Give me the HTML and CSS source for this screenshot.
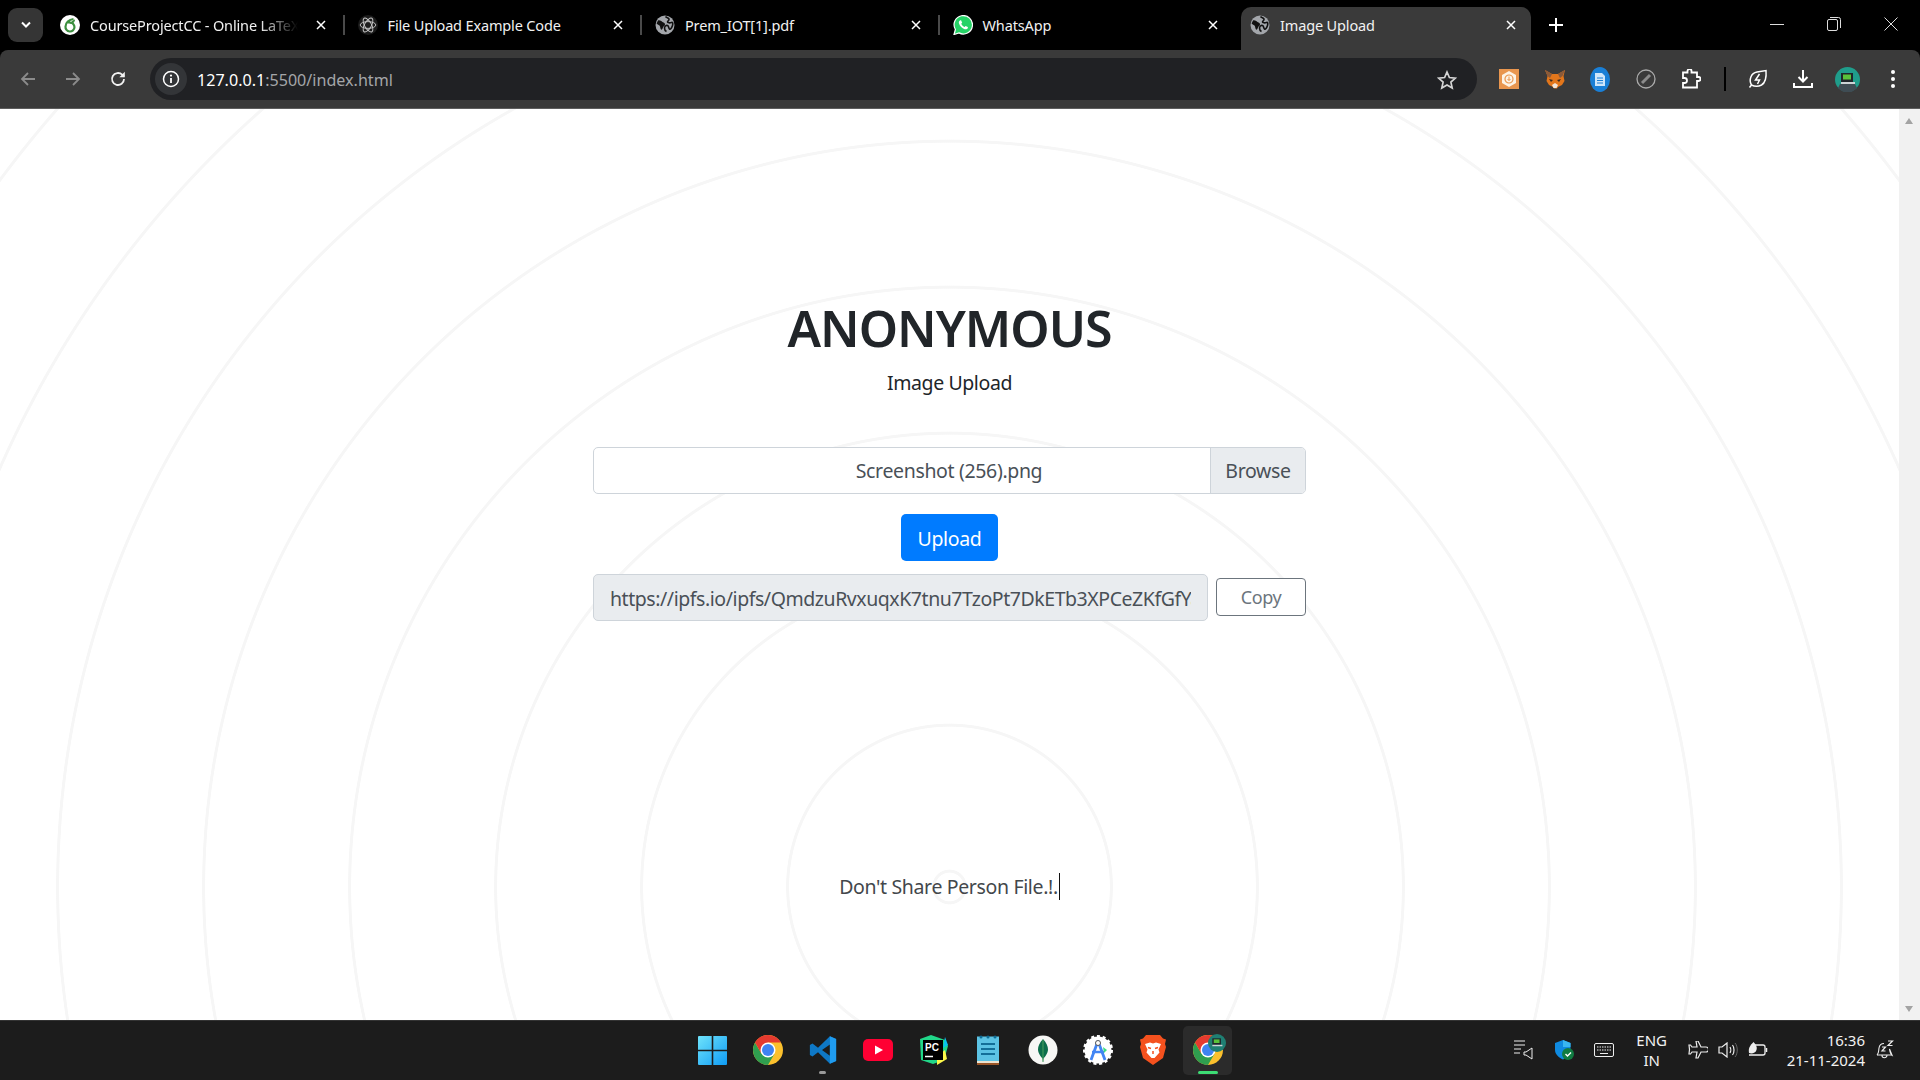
FILE: index.html
```html
<!DOCTYPE html>
<html lang="en">
<head>
  <meta charset="UTF-8">
  <title>Image Upload</title>
  <link rel="stylesheet" href="styles.css">
</head>
<body>

  <svg class="defs" width="0" height="0">
    <symbol id="globe" viewBox="0 0 20 20">
      <circle cx="10" cy="10" r="9.5" fill="#a3a6ab"/>
      <path d="M3 5.500c2-.5 3 .5 4.500 1.500s2.500 1 2.500 2.500-1.500 1.500-2 3-1 2.500-2 2c-1-1-.5-3-1.500-4S2 9.500 1.600 8.500z" fill="#111"/>
      <path d="M10.500 1.500c1 1.500 3 1 3.500 2.500s-1.500 2-1.500 3 2.500 1 4 .5 1.500 1 1 3-2 4-3 3.500-.5-3-2-3.500-3 1-3 2.500 1 3 2 3.500" fill="none" stroke="#111" stroke-width="1.600"/>
    </symbol>
    <symbol id="close" viewBox="0 0 12 12">
      <path d="M2 2l8 8M10 2l-8 8" fill="none" stroke="#fff" stroke-width="1.500"/>
    </symbol>
    <symbol id="chrome" viewBox="0 0 48 48">
      <circle cx="24" cy="24" r="20" fill="#fbc02d"/>
      <path d="M6.680 14A20 20 0 0 0 24 44l8.660-15H15.340z" fill="#2f9e4f"/>
      <path d="M24 4A20 20 0 0 0 6.680 14l8.660 15L24 14h17.320A20 20 0 0 0 24 4z" fill="#e53a2f"/>
      <circle cx="24" cy="24" r="10" fill="#fff"/>
      <circle cx="24" cy="24" r="8" fill="#3f83f1"/>
    </symbol>
  </svg>

  <div class="browser">
    <header class="tabstrip">
      <button class="tab-menu">
        <svg width="12" height="8" viewBox="0 0 12 8"><path d="M2 1.500l4 4 4-4" fill="none" stroke="#fff" stroke-width="2"/></svg>
      </button>

      <div class="tab">
        <svg class="favicon" viewBox="0 0 20 20">
          <circle cx="10" cy="10" r="10" fill="#fff"/>
          <path d="M13.500 4C9 4.500 5.500 7.500 5.500 11.500a4.500 4.500 0 1 0 4.500-4c-1.500 0-2 .5-2 .5" fill="none" stroke="#3c8f3f" stroke-width="2.200"/>
          <path d="M10 9c1-2.500 3-4 5-4.500 0 2.500-2 4.500-5 4.500z" fill="#3c8f3f"/>
        </svg>
        <span class="tab-title tab-title-fade">CourseProjectCC - Online LaTeX</span>
        <svg class="tab-close"><use href="#close"/></svg>
      </div>

      <div class="tab">
        <svg class="favicon" viewBox="0 0 20 20">
          <circle cx="10" cy="10" r="10" fill="#1c1c1c"/>
          <g fill="none" stroke="#c9c9c9" stroke-width=".9">
            <ellipse cx="10" cy="10" rx="7.800" ry="3.400"/>
            <ellipse cx="10" cy="10" rx="7.800" ry="3.400" transform="rotate(60 10 10)"/>
            <ellipse cx="10" cy="10" rx="7.800" ry="3.400" transform="rotate(120 10 10)"/>
          </g>
        </svg>
        <span class="tab-title">File Upload Example Code</span>
        <svg class="tab-close"><use href="#close"/></svg>
      </div>

      <div class="tab">
        <svg class="favicon"><use href="#globe"/></svg>
        <span class="tab-title">Prem_IOT[1].pdf</span>
        <svg class="tab-close"><use href="#close"/></svg>
      </div>

      <div class="tab tab-last">
        <svg class="favicon" viewBox="0 0 20 20">
          <path d="M1 19.500l1.400-5A9.200 9.200 0 1 1 6 17.900z" fill="#25d366" stroke="#fff" stroke-width="1.200"/>
          <path d="M7 5.500c-1 .6-1.500 1.600-1 3 1 2.700 3 4.700 5.700 5.700 1.400.4 2.500 0 3-1 .3-.6.300-1 .1-1.200l-2.200-1.100-1 1.200c-1.500-.6-2.700-1.800-3.400-3.400l1-1L8.200 5.500c-.3-.3-.8-.3-1.200 0z" fill="#fff"/>
        </svg>
        <span class="tab-title">WhatsApp</span>
        <svg class="tab-close"><use href="#close"/></svg>
      </div>

      <div class="tab tab-active">
        <svg class="favicon"><use href="#globe"/></svg>
        <span class="tab-title">Image Upload</span>
        <svg class="tab-close"><use href="#close"/></svg>
      </div>

      <svg class="tab-new" width="14" height="14" viewBox="0 0 14 14"><path d="M7 0v14M0 7h14" stroke="#fff" stroke-width="2"/></svg>

      <div class="win-controls">
        <svg width="14" height="14" viewBox="0 0 14 14"><path d="M0 7.500h14" stroke="#ddd"/></svg>
        <svg width="14" height="14" viewBox="0 0 14 14"><rect x=".5" y="2.500" width="10" height="11" rx="1.500" fill="none" stroke="#ddd"/><path d="M3 .5h8.500a2 2 0 0 1 2 2V11" fill="none" stroke="#ddd"/></svg>
        <svg width="14" height="14" viewBox="0 0 14 14"><path d="M.5.5l13 13M13.500.5l-13 13" stroke="#ddd"/></svg>
      </div>
    </header>

    <nav class="toolbar">
      <div class="nav-btn">
        <svg width="18" height="18" viewBox="0 0 18 18"><path d="M16 9H3M9 3L3 9l6 6" fill="none" stroke="#8b8b8b" stroke-width="1.800"/></svg>
      </div>
      <div class="nav-btn">
        <svg width="18" height="18" viewBox="0 0 18 18"><path d="M2 9h13M9 3l6 6-6 6" fill="none" stroke="#8b8b8b" stroke-width="1.800"/></svg>
      </div>
      <div class="nav-btn">
        <svg width="18" height="18" viewBox="0 0 18 18"><path d="M15 9a6 6 0 1 1-1.800-4.300L15 6.500" fill="none" stroke="#f1f1f1" stroke-width="1.800"/><path d="M15.800 1.800v5.500h-5.500z" fill="#f1f1f1"/></svg>
      </div>

      <div class="omnibox">
        <span class="site-info">
          <svg width="18" height="18" viewBox="0 0 18 18"><circle cx="9" cy="9" r="7.500" fill="none" stroke="#fff" stroke-width="1.500"/><path d="M9 8v5" stroke="#fff" stroke-width="1.800"/><circle cx="9" cy="5.600" r="1.100" fill="#fff"/></svg>
        </span>
        <span class="url"><b>127.0.0.1</b>:5500/index.html</span>
        <svg class="star" width="20" height="20" viewBox="0 0 20 20"><path d="M10 2l2.400 5.500 6 .6-4.500 4 1.300 5.900-5.200-3-5.200 3 1.300-5.900-4.500-4 6-.6z" fill="none" stroke="#d5d5d5" stroke-width="1.700"/></svg>
      </div>

      <div class="ext-btn">
        <svg width="20" height="20" viewBox="0 0 20 20">
          <rect width="20" height="20" fill="#e9964f"/>
          <path d="M10 2l7 4v8l-7 4-7-4V6z" fill="#fdf3e6"/>
          <circle cx="10" cy="10" r="4" fill="none" stroke="#e9964f" stroke-width="1.200"/>
          <path d="M10 7.500v4M8.500 10l1.500 1.500L11.500 10" fill="none" stroke="#e9964f"/>
        </svg>
      </div>
      <div class="ext-btn">
        <svg width="20" height="20" viewBox="0 0 20 20">
          <path d="M0 1l7 4h6l7-4-1.500 6 1 5-2.500 4-4 2-1 1.500H9L8 18l-4-2-2.500-4 1-5z" fill="#e2761b"/>
          <path d="M0 1l7 4-2 4-2.500-2zM20 1l-7 4 2 4 2.500-2z" fill="#8a5a3a"/>
          <path d="M4 10l4 1-2 2zM16 10l-4 1 2 2z" fill="#3a2a20"/>
          <path d="M7 16l3-2 3 2-1.500 3h-3z" fill="#f2e4d6"/>
        </svg>
      </div>
      <div class="ext-btn">
        <svg width="20" height="25" viewBox="0 0 20 25">
          <ellipse cx="10" cy="12.500" rx="10" ry="12.500" fill="#1a7fd6"/>
          <path d="M5 6h7l3 3v10H5z" fill="#cfe6fa"/>
          <path d="M7 11h6M7 13.500h6M7 16h6" stroke="#1a7fd6"/>
        </svg>
      </div>
      <div class="ext-btn">
        <svg width="20" height="20" viewBox="0 0 20 20"><circle cx="10" cy="10" r="9" fill="none" stroke="#aaa" stroke-width="1.300"/><path d="M6 14l8-8" stroke="#8c8c8c" stroke-width="3"/></svg>
      </div>
      <div class="ext-btn">
        <svg width="20" height="20" viewBox="0 0 20 20"><path d="M2 3.500h4.500V2a2 2 0 0 1 4 0v1.500H16V8h1.500a2 2 0 0 1 0 4H16v6.500H2V14h1.500a2.500 2.500 0 0 0 0-5H2z" fill="none" stroke="#fff" stroke-width="1.800"/></svg>
      </div>
      <div class="tool-sep"></div>
      <div class="ext-btn ext-narrow">
        <svg width="20" height="20" viewBox="0 0 20 20"><path d="M3.500 16C.5 11 3 4 9 3l9-1.500c.5 6 0 12-4.500 14.500-3.500 1.800-7 1.500-10 0z" fill="none" stroke="#fff" stroke-width="1.500"/><path d="M11.500 5L7.500 11h4l-2 4" fill="none" stroke="#fff" stroke-width="1.500"/><path d="M1.500 18.500l2-2.500" stroke="#fff" stroke-width="1.500"/></svg>
      </div>
      <div class="ext-btn ext-narrow">
        <svg width="20" height="20" viewBox="0 0 20 20"><path d="M10 1v11M5.500 8l4.500 4.500L14.500 8" fill="none" stroke="#fff" stroke-width="2"/><path d="M1 14v4h18v-4" fill="none" stroke="#fff" stroke-width="2"/></svg>
      </div>
      <div class="ext-btn ext-narrow">
        <svg width="25" height="25" viewBox="0 0 25 25">
          <circle cx="12.500" cy="12.500" r="12.500" fill="#1f9d8b"/>
          <path d="M3 21a12.500 12.500 0 0 0 19 0l-2-4H5z" fill="#3f4c54"/>
          <rect x="6" y="6" width="12" height="9" fill="#20262b"/>
          <rect x="8" y="7.500" width="8" height="5" fill="#5ac23a"/>
          <rect x="6" y="15" width="14" height="2" fill="#cdd3d6"/>
        </svg>
      </div>
      <div class="ext-btn ext-narrow">
        <svg width="4" height="18" viewBox="0 0 4 18"><circle cx="2" cy="2" r="2" fill="#fff"/><circle cx="2" cy="9" r="2" fill="#fff"/><circle cx="2" cy="16" r="2" fill="#fff"/></svg>
      </div>
    </nav>

    <div class="viewport">
      <main class="page">
        <section class="upload-box">
          <h1>ANONYMOUS</h1>
          <p class="subtitle">Image Upload</p>

          <div class="file-field">
            <span class="file-name">Screenshot (256).png</span>
            <span class="file-browse">Browse</span>
          </div>

          <button class="btn-upload">Upload</button>

          <div class="result-row">
            <div class="result-link"><span>https://ipfs.io/ipfs/QmdzuRvxuqxK7tnu7TzoPt7DkETb3XPCeZKfGfYabc</span></div>
            <button class="btn-copy">Copy</button>
          </div>
        </section>

        <p class="typed"><span>Don't Share Person File.!.</span></p>
      </main>

      <aside class="scrollbar">
        <span class="arrow arrow-up"></span>
        <span class="arrow arrow-down"></span>
      </aside>
    </div>

    <footer class="taskbar">
      <div></div>
      <div class="task-icons">
        <div class="task-icon">
          <svg width="29" height="29" viewBox="0 0 29 29">
            <defs><linearGradient id="win" x1="0" y1="0" x2="1" y2="1"><stop offset="0" stop-color="#6fe3fb"/><stop offset="1" stop-color="#0f9cf5"/></linearGradient></defs>
            <path d="M1 0h12.700v13.700H0V1a1 1 0 0 1 1-1zM15.300 0H28a1 1 0 0 1 1 1v12.700H15.300zM0 15.300h13.700V29H1a1 1 0 0 1-1-1zM15.300 15.300H29V28a1 1 0 0 1-1 1H15.300z" fill="url(#win)"/>
          </svg>
        </div>
        <div class="task-icon"><svg width="36" height="36"><use href="#chrome"/></svg></div>
        <div class="task-icon task-open">
          <svg width="30" height="30" viewBox="0 0 24 24">
            <path d="M17.500 1L8 10.200 3.600 6.800 1.500 8v8l2.100 1.200L8 13.800 17.500 23l5-2.200V3.200zM17.500 7.500v9L11.200 12z" fill="#0e78c6" fill-rule="evenodd"/>
            <path d="M17.500 1l5 2.200v17.600l-5 2.200z" fill="#1f9cf0"/>
          </svg>
        </div>
        <div class="task-icon">
          <svg width="30" height="22" viewBox="0 0 30 22"><rect width="30" height="22" rx="5" fill="#ff0033"/><path d="M12 6.500l8 4.500-8 4.500z" fill="#fff"/></svg>
        </div>
        <div class="task-icon">
          <svg width="32" height="32" viewBox="0 0 32 32">
            <path d="M3 5l11-4 14 5 3 6-4 14-11 4-12-4z" fill="#21d789"/>
            <path d="M28 3l3 8-5 3z" fill="#07c3f2"/>
            <path d="M20 31l10-6-2-9-8 6z" fill="#fcf84a"/>
            <rect x="6" y="6" width="20" height="20" fill="#000"/>
            <text class="pc-text" x="8" y="17">PC</text>
            <path d="M8 22.500h8" stroke="#fff" stroke-width="1.500"/>
          </svg>
        </div>
        <div class="task-icon">
          <svg width="22" height="30" viewBox="0 0 22 30">
            <rect y="1.500" width="22" height="28" fill="#5cc3e4"/>
            <rect y="26" width="22" height="2" fill="#ece3d0"/>
            <rect y="28" width="22" height="2" fill="#9a5527"/>
            <path d="M4 2h0M11 2h0M18 2h0" stroke="#0f6d96" stroke-width="3" stroke-linecap="round"/>
            <path d="M4 9h14M4 14h14M4 19h14" stroke="#136f98" stroke-width="2"/>
          </svg>
        </div>
        <div class="task-icon">
          <svg width="30" height="30" viewBox="0 0 30 30"><circle cx="15" cy="15" r="14.500" fill="#f7f7f5"/><path d="M15 4c3.500 4 5 7 5 10.500S17 22 15.500 23.500L15 27l-.5-3.500C13 22 10 18 10 14.500S11.500 8 15 4z" fill="#0d6e4b"/><path d="M15 5v22" stroke="#4aa05f"/></svg>
        </div>
        <div class="task-icon">
          <svg width="30" height="30" viewBox="0 0 30 30">
            <circle cx="15" cy="15" r="13.500" fill="#fff" stroke="#fff" stroke-width="3" stroke-dasharray="3 2.650"/>
            <path d="M15 6L8 25M15 6l7 19" fill="none" stroke="#4285f4" stroke-width="2.800"/>
            <path d="M9 17h12" stroke="#4285f4" stroke-width="2.500"/>
            <path d="M20 12l4 3-3 3z" fill="#3ddc84"/>
            <circle cx="15" cy="8" r="2.500" fill="#fff" stroke="#555"/>
          </svg>
        </div>
        <div class="task-icon">
          <svg width="26" height="30" viewBox="0 0 26 30">
            <path d="M6 0h14l3 3.500 3 1-1 4.500 1 3-3 11L13 30 3 23 0 12l1-3L0 4.500l3-1z" fill="#f4511e"/>
            <path d="M5 9l5-1.500 3 1 3-1L21 9l-2.500 5.500 1 3L14.500 23h-3l-5-5.500 1-3z" fill="#fff"/>
            <path d="M8 12.500l3 1M18 12.500l-3 1M13 16v3" stroke="#f4511e" stroke-width="1.500"/>
          </svg>
        </div>
        <div class="task-icon task-active">
          <svg width="36" height="36"><use href="#chrome"/></svg>
          <svg class="badge" width="18" height="18" viewBox="0 0 25 25">
            <circle cx="12.500" cy="12.500" r="12.500" fill="#1f7f73"/>
            <rect x="6" y="6" width="12" height="9" fill="#20262b"/>
            <rect x="8" y="7.500" width="8" height="5" fill="#5ac23a"/>
            <rect x="6" y="15" width="14" height="2" fill="#cdd3d6"/>
          </svg>
        </div>
      </div>

      <div class="tray">
        <div class="tray-btn">
          <svg width="20" height="20" viewBox="0 0 20 20"><path d="M0 1h11M0 5h11M0 9h7M0 13h6" stroke="#eee"/><path d="M12 12l6-4v11l-6-4h-2v-3z" fill="none" stroke="#eee"/></svg>
        </div>
        <div class="tray-btn">
          <svg width="20" height="20" viewBox="0 0 20 20"><path d="M9 0l7.500 3v7c0 4-3.500 7.500-7.500 9.500C4.500 17.500 1 14 1 10V3z" fill="#0f8ae0"/><path d="M9 0l7.500 3v4H9z" fill="#39b7f0"/><circle cx="14" cy="14" r="6" fill="#107c41"/><path d="M11.500 14l2 2 3.500-3.500" fill="none" stroke="#fff" stroke-width="1.400"/></svg>
        </div>
        <div class="tray-btn">
          <svg width="20" height="14" viewBox="0 0 20 14"><rect x=".5" y=".5" width="19" height="13" rx="1.500" fill="none" stroke="#eee"/><path d="M3 4h14M3 7h14" stroke="#eee" stroke-dasharray="1.500 1"/><path d="M6 10.500h8" stroke="#eee"/></svg>
        </div>
        <div class="tray-lang">ENG<br>IN</div>
        <div class="tray-status">
          <svg width="20" height="18" viewBox="0 0 20 18"><path d="M8 0h2l3 6h5a2 2 0 0 1 0 5h-5l-3 6H8l1-6H4l-1.500 2H1l.5-4.500L1 4h1.500L4 6h5z" fill="none" stroke="#eee" stroke-width="1.200"/></svg>
        </div>
        <div class="tray-status">
          <svg width="20" height="16" viewBox="0 0 20 16"><path d="M1 5h3l5-4v14l-5-4H1z" fill="none" stroke="#eee" stroke-width="1.200"/><path d="M12 5c1 1.500 1 4.500 0 6M14.500 3c2 2.500 2 7.500 0 10" fill="none" stroke="#eee" stroke-width="1.200"/><path d="M17 1c3 3.500 3 10.500 0 14" fill="none" stroke="#666"/></svg>
        </div>
        <div class="tray-status">
          <svg width="20" height="16" viewBox="0 0 20 16"><path d="M6 3h9a2 2 0 0 1 2 2v6a2 2 0 0 1-2 2H1" fill="none" stroke="#eee" stroke-width="1.300"/><path d="M18.500 6v4" stroke="#eee" stroke-width="1.500"/><path d="M1 11C0 6 2.500 3 5.500 0 8 3 9.500 5 8.500 8s-4.500 4-7.500 3z" fill="#eee"/></svg>
        </div>
        <div class="clock">16:36<br>21-11-2024</div>
        <div class="tray-bell">
          <svg width="18" height="20" viewBox="0 0 18 20"><path d="M1 15c2-1.500 1.500-4 2-7s3-4.500 5-4.500M13.500 9c.3 2.500.5 4.500 2.500 6z" fill="none" stroke="#eee" stroke-width="1.100"/><path d="M1 15h15M6 15.500c0 3 4.500 3 5 0" fill="none" stroke="#eee" stroke-width="1.100"/><path d="M6 7h3.500L6 11h3.500M12 1h4.500L12 5.500h4.500" fill="none" stroke="#eee" stroke-width="1.200"/></svg>
        </div>
      </div>
    </footer>
  </div>

</body>
</html>
```

FILE: styles.css
```css
* {
  margin: 0;
  padding: 0;
  box-sizing: border-box;
}

body {
  font-family: "Noto Sans", "Open Sans", sans-serif;
  background-color: #000;
  overflow: hidden;
}

.defs {
  display: block;
  height: 0;
}

.browser {
  width: 1920px;
  height: 1080px;
  display: flex;
  flex-direction: column;
}

/* tabs */

.tabstrip {
  height: 50px;
  display: flex;
  align-items: center;
  background-color: #000;
  padding-left: 8px;
}

.tab-menu {
  width: 35px;
  height: 34px;
  margin-right: 4px;
  margin-top: -1px;
  display: flex;
  align-items: center;
  justify-content: center;
  background-color: #353535;
  border: none;
  border-radius: 9px;
}

.tab {
  width: 297.5px;
  height: 50px;
  padding-left: 13px;
  padding-right: 18px;
  display: flex;
  align-items: center;
  position: relative;
  color: #f1f1f1;
  font-size: 14.5px;
  letter-spacing: -0.15px;
}

.tab::after {
  content: '';
  position: absolute;
  right: 0;
  top: 15px;
  height: 20px;
  width: 2px;
  background-color: #4a4a4a;
}

.tab-last::after,
.tab-active::after {
  display: none;
}

.tab-active::before {
  content: '';
  position: absolute;
  left: 4px;
  right: 4px;
  top: 7px;
  bottom: 0;
  background-color: #3a3a3a;
  border-radius: 10px 10px 0 0;
}

.tab-active > * {
  position: relative;
}

.favicon {
  width: 20px;
  height: 20px;
  flex: none;
  margin-right: 10px;
}

.tab-title {
  flex: 1;
  white-space: nowrap;
}

.tab-title-fade {
  -webkit-mask-image: linear-gradient(to right, #000 170px, transparent 208px);
  mask-image: linear-gradient(to right, #000 170px, transparent 208px);
}

.tab-close {
  width: 12px;
  height: 12px;
  flex: none;
}

.tab-new {
  margin-left: 14px;
  flex: none;
}

.win-controls {
  margin-left: auto;
  display: flex;
  gap: 43px;
  padding-right: 22px;
  margin-top: -2px;
}

/* toolbar */

.toolbar {
  height: 59px;
  display: flex;
  align-items: center;
  padding-left: 5px;
  padding-right: 5px;
  background-color: #3a3a3a;
  border-bottom: 1px solid #5e5e5e;
  border-radius: 8px 8px 0 0;
}

.nav-btn {
  width: 45px;
  display: flex;
  justify-content: center;
}

.omnibox {
  flex: 1;
  height: 42px;
  margin-left: 10px;
  margin-right: 10px;
  padding-left: 5px;
  padding-right: 20px;
  display: flex;
  align-items: center;
  background-color: #202124;
  border-radius: 21px;
}

.site-info {
  width: 32px;
  height: 32px;
  margin-right: 10px;
  display: flex;
  align-items: center;
  justify-content: center;
  background-color: #333538;
  border-radius: 50%;
}

.url {
  flex: 1;
  padding-top: 1px;
  color: #a4a6a9;
  font-size: 16.1px;
}

.url b {
  color: #fff;
  font-weight: 400;
}

.star {
  margin-top: 1px;
}

.ext-btn {
  width: 45.5px;
  display: flex;
  align-items: center;
  justify-content: center;
}

.ext-narrow {
  width: 44.8px;
}

.tool-sep {
  width: 2px;
  height: 24px;
  margin: 0 9.700px 0 10px;
  background-color: #000;
}

/* page */

.viewport {
  height: 911px;
  display: flex;
}

.page {
  flex: 1;
  display: flex;
  flex-direction: column;
  align-items: center;
  background-color: #fff;
  background-image: repeating-radial-gradient(circle at 949.5px 778px, transparent 0, transparent 14px, #f6f6f6 14.700px, #f6f6f6 17px, transparent 17.700px, transparent 146px);
  color: #212529;
}

.upload-box {
  width: 713px;
  padding-top: 189px;
  display: flex;
  flex-direction: column;
  align-items: center;
}

h1 {
  font-size: 50px;
  font-weight: 600;
  line-height: 60px;
  letter-spacing: -1px;
}

.subtitle {
  margin-top: 10px;
  font-size: 19.5px;
  line-height: 30px;
  letter-spacing: -0.4px;
}

.file-field {
  width: 100%;
  height: 47px;
  margin-top: 49px;
  display: flex;
  background-color: #fff;
  border: 1px solid #ced4da;
  border-radius: 5px;
  color: #495057;
  font-size: 19.5px;
  letter-spacing: -0.35px;
  overflow: hidden;
}

.file-name {
  flex: 1;
  display: flex;
  align-items: center;
  justify-content: center;
  padding-left: 94px;
}

.file-browse {
  width: 95px;
  display: flex;
  align-items: center;
  justify-content: center;
  background-color: #e9ecef;
  border-left: 1px solid #ced4da;
}

.btn-upload {
  width: 97px;
  height: 47px;
  margin-top: 20px;
  padding-top: 1px;
  background-color: #007bff;
  color: #fff;
  border: none;
  border-radius: 5px;
  font-family: inherit;
  font-size: 19.5px;
  letter-spacing: -0.35px;
}

.result-row {
  width: 100%;
  margin-top: 13px;
  display: flex;
  align-items: center;
  justify-content: space-between;
}

.result-link {
  width: 615px;
  height: 47px;
  padding: 1px 16px 0;
  display: flex;
  align-items: center;
  background-color: #e9ecef;
  border: 1px solid #ced4da;
  border-radius: 5px;
  color: #495057;
  font-size: 19.5px;
  letter-spacing: -0.44px;
}

.result-link span {
  width: 100%;
  white-space: nowrap;
  overflow: hidden;
}

.btn-copy {
  width: 90px;
  height: 38px;
  margin-bottom: 1px;
  background-color: #fff;
  color: #6c757d;
  border: 1px solid #6c757d;
  border-radius: 4px;
  font-family: inherit;
  font-size: 18px;
  letter-spacing: -0.4px;
}

.typed {
  margin-top: 252px;
  font-size: 19.5px;
  line-height: 27px;
  color: #43474b;
  letter-spacing: -0.35px;
}

.typed span {
  display: inline-block;
  padding-right: 1px;
  border-right: 1px solid #111;
}

.scrollbar {
  width: 21px;
  position: relative;
  background-color: #f1f1f1;
}

.arrow {
  position: absolute;
  left: 6px;
  border-left: 4.500px solid transparent;
  border-right: 4.500px solid transparent;
}

.arrow-up {
  top: 9px;
  border-bottom: 6px solid #a3a3a3;
}

.arrow-down {
  bottom: 8px;
  border-top: 6px solid #a3a3a3;
}

/* taskbar */

.taskbar {
  height: 60px;
  display: grid;
  grid-template-columns: 1fr auto 1fr;
  background-color: #1c1c1c;
  border-top: 1px solid #333;
}

.task-icons {
  display: flex;
  align-items: center;
  padding-bottom: 1px;
}

.task-icon {
  width: 55px;
  height: 49px;
  display: flex;
  align-items: center;
  justify-content: center;
  position: relative;
}

.task-open::after,
.task-active::after {
  content: '';
  position: absolute;
  bottom: 1px;
  height: 3px;
  border-radius: 2px;
}

.task-open::after {
  width: 7px;
  background-color: #9a9a9a;
}

.task-active {
  width: 49px;
  margin: 0 3px;
  background-color: #2b2b2b;
  border-radius: 5px;
}

.task-active::after {
  width: 20px;
  background-color: #3ddc74;
}

.badge {
  position: absolute;
  top: 8px;
  right: 6px;
}

.pc-text {
  font-family: "Liberation Sans", sans-serif;
  font-size: 10px;
  font-weight: 700;
  fill: #fff;
}

.tray {
  display: flex;
  align-items: center;
  justify-content: flex-end;
  padding-right: 23px;
  padding-bottom: 2px;
  color: #f2f2f2;
}

.tray-btn {
  width: 40px;
  display: flex;
  justify-content: center;
}

.tray-lang {
  width: 56px;
  margin-right: 3px;
  text-align: center;
  font-size: 15px;
  line-height: 20px;
}

.tray-status {
  width: 30px;
  display: flex;
  justify-content: center;
}

.clock {
  margin-left: 14px;
  text-align: right;
  font-size: 15px;
  line-height: 20px;
  white-space: nowrap;
}

.tray-bell {
  width: 32px;
  padding-left: 11px;
  display: flex;
}
```
